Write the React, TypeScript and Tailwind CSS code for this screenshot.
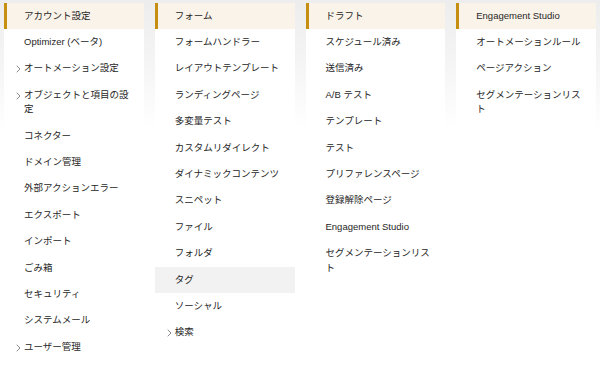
import React from "react";

type Item = { label: string; chevron?: boolean; selected?: boolean };

const columns: { header: string; items: Item[] }[] = [
  {
    header: "アカウント設定",
    items: [
      { label: "Optimizer (ベータ)" },
      { label: "オートメーション設定", chevron: true },
      { label: "オブジェクトと項目の設定", chevron: true },
      { label: "コネクター" },
      { label: "ドメイン管理" },
      { label: "外部アクションエラー" },
      { label: "エクスポート" },
      { label: "インポート" },
      { label: "ごみ箱" },
      { label: "セキュリティ" },
      { label: "システムメール" },
      { label: "ユーザー管理", chevron: true },
    ],
  },
  {
    header: "フォーム",
    items: [
      { label: "フォームハンドラー" },
      { label: "レイアウトテンプレート" },
      { label: "ランディングページ" },
      { label: "多変量テスト" },
      { label: "カスタムリダイレクト" },
      { label: "ダイナミックコンテンツ" },
      { label: "スニペット" },
      { label: "ファイル" },
      { label: "フォルダ" },
      { label: "タグ", selected: true },
      { label: "ソーシャル" },
      { label: "検索", chevron: true },
    ],
  },
  {
    header: "ドラフト",
    items: [
      { label: "スケジュール済み" },
      { label: "送信済み" },
      { label: "A/B テスト" },
      { label: "テンプレート" },
      { label: "テスト" },
      { label: "プリファレンスページ" },
      { label: "登録解除ページ" },
      { label: "Engagement Studio" },
      { label: "セグメンテーションリスト" },
    ],
  },
  {
    header: "Engagement Studio",
    items: [
      { label: "オートメーションルール" },
      { label: "ページアクション" },
      { label: "セグメンテーションリスト" },
    ],
  },
];

function Chevron() {
  return (
    <svg
      className="absolute left-[12px] top-[10px]"
      width="5"
      height="8"
      viewBox="0 0 5 8"
      fill="none"
    >
      <polyline points="1,1 4,4 1,7" stroke="#8a8a8a" strokeWidth="1" strokeLinecap="round" strokeLinejoin="round" />
    </svg>
  );
}

export default function App() {
  return (
    <div
      className="w-[600px] h-[367px] overflow-hidden bg-[linear-gradient(180deg,#ededed_0px,#f4f4f4_60px,#ffffff_130px)] text-[#262626]"
      style={{ fontFamily: '"Liberation Sans", "Noto Sans CJK JP", sans-serif' }}
    >
      <div className="grid grid-cols-4 gap-x-[11px] px-[4px] pt-[3px] h-full">
        {columns.map((col) => (
          <div key={col.header} className="bg-white h-full">
            <div className="bg-[#faf3e9] border-l-[3px] border-[#c78f12] pl-[17px] pr-[12px] py-[6px] text-[9.5px] leading-[14px]">
              {col.header}
            </div>
            {col.items.map((it) => (
              <div
                key={it.label}
                className={
                  "relative pl-[20px] pr-[12px] py-[6px] text-[9.5px] leading-[14.4px] " +
                  (it.selected ? "bg-[#f2f2f2]" : "")
                }
              >
                {it.chevron && <Chevron />}
                {it.label}
              </div>
            ))}
          </div>
        ))}
      </div>
    </div>
  );
}
